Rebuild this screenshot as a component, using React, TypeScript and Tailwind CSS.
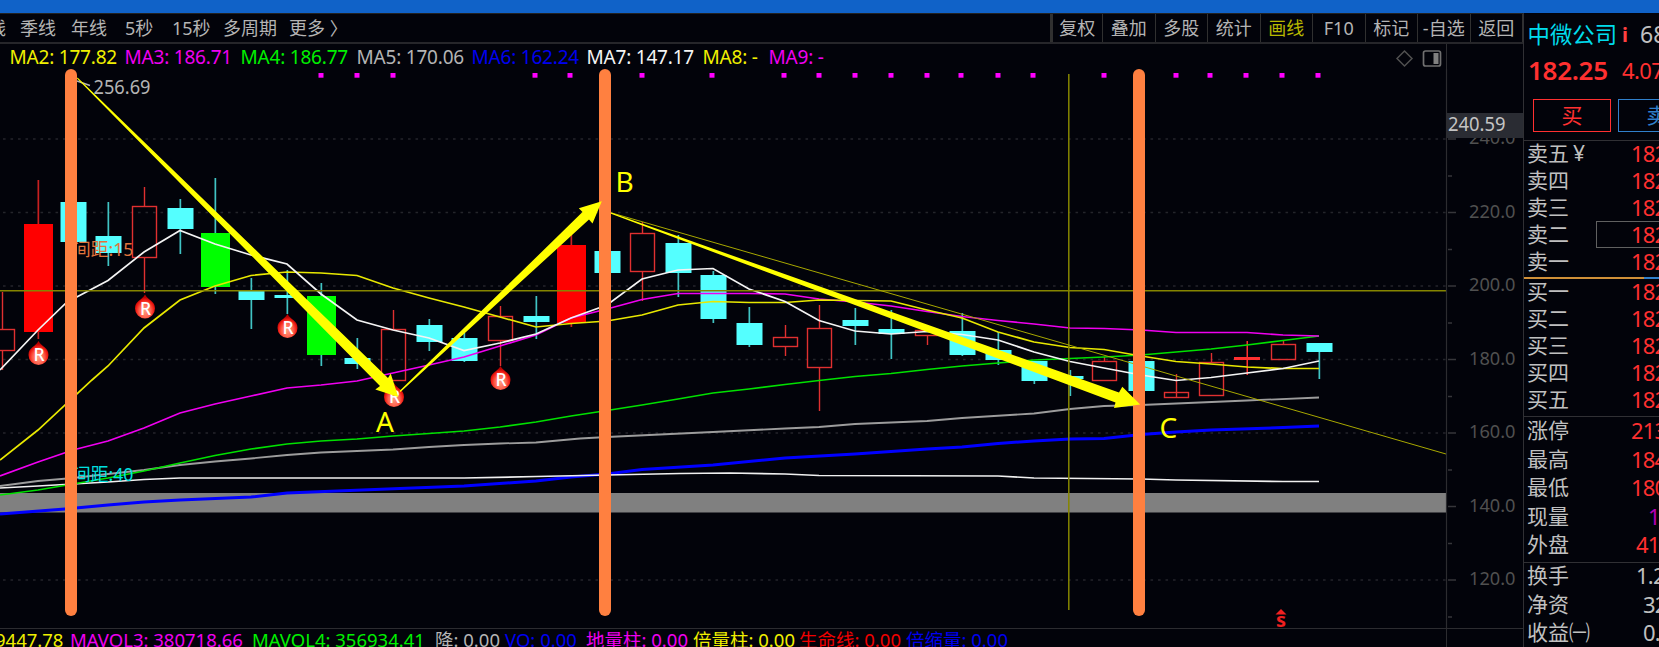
import clsx from 'clsx';

type CandleKind = 'up' | 'down' | 'limitUp' | 'limitDown' | 'flat';

interface Candle {
  x: number;
  kind: CandleKind;
  top: number;
  bottom: number;
  high: number;
  low: number;
}

const c = (x: number, kind: CandleKind, top: number, bottom: number, high: number, low: number): Candle => ({
  x,
  kind,
  top,
  bottom,
  high,
  low,
});

const candles: Candle[] = [
  c(2, 'up', 329, 351, 292, 370),
  c(38, 'limitUp', 224, 332, 180, 339),
  c(73, 'down', 202, 242, 202, 242),
  c(108, 'down', 236, 253, 202, 266),
  c(144, 'up', 206, 258, 187, 293),
  c(180, 'down', 208, 229, 199, 254),
  c(215, 'limitDown', 233, 287, 178, 294),
  c(251, 'down', 291, 300, 278, 329),
  c(287, 'down', 295, 298, 270, 314),
  c(321, 'limitDown', 296, 355, 283, 366),
  c(357, 'down', 358, 364, 338, 369),
  c(393, 'up', 329, 381, 310, 381),
  c(429, 'down', 325, 342, 319, 351),
  c(464, 'down', 338, 361, 333, 362),
  c(500, 'up', 316, 341, 306, 366),
  c(536, 'down', 316, 322, 296, 339),
  c(571, 'limitUp', 245, 323, 235, 327),
  c(607, 'down', 251, 273, 251, 273),
  c(642, 'up', 233, 272, 222, 301),
  c(678, 'down', 243, 273, 235, 297),
  c(713, 'down', 275, 319, 271, 323),
  c(749, 'down', 323, 345, 307, 347),
  c(785, 'up', 337, 347, 325, 356),
  c(819, 'up', 328, 368, 305, 411),
  c(855, 'down', 320, 326, 308, 345),
  c(891, 'down', 329, 334, 310, 359),
  c(927, 'up', 330, 336, 330, 345),
  c(962, 'down', 331, 355, 313, 356),
  c(998, 'down', 350, 360, 332, 365),
  c(1034, 'down', 361, 381, 361, 384),
  c(1070, 'down', 376, 379, 370, 396),
  c(1104, 'up', 361, 381, 357, 381),
  c(1141, 'down', 361, 391, 361, 391),
  c(1176, 'up', 392, 398, 374, 392),
  c(1211, 'up', 362, 396, 353, 396),
  c(1247, 'flat', 357, 360, 341, 375),
  c(1283, 'up', 344, 360, 341, 360),
  c(1319, 'down', 343, 352, 343, 379),
];

const averages = [
  {
    color: '#9c9c9c',
    width: 1.8,
    points:
      '0,486 38,481 73,478 108,474 144,470 180,465 215,461.5 251,458.5 287,455 321,452.5 357,451 393,449.5 429,447 464,445 500,443.5 536,442.5 580,438.5 607,437 713,432 785,428.5 819,427 855,424 927,421 962,418 1034,413.5 1070,409 1104,406 1141,405 1247,400.5 1319,397.5',
  },
  {
    color: '#0000ff',
    width: 3,
    points:
      '0,514 65,509 108,505 144,502 180,500 251,497 287,493 400,488.5 464,486 536,481 571,477 607,474 642,469.5 713,465 785,458 855,454 927,449 962,447 998,443.5 1034,441 1070,439 1104,438.5 1141,434.5 1176,432 1211,430 1283,427.5 1319,426',
  },
  {
    color: '#f0f0f0',
    width: 1.7,
    points:
      '0,488 38,486 73,484 108,482 144,479.5 180,478 464,478 536,476.5 607,475 680,473.5 730,473 785,474 819,475.5 998,476 1034,478 1141,479 1176,480 1283,481.5 1319,481.5',
  },
  {
    color: '#00e000',
    width: 1.7,
    points:
      '0,495 38,490 73,484 108,478 144,471 180,463 215,455.5 251,449 287,444 321,441 357,439 393,436 429,433.5 464,431 500,427 536,422 571,416 607,410.5 642,405 678,399 713,393 749,389 785,384.5 819,380.5 855,376.5 891,373.5 927,369.5 962,366 998,363 1034,360 1070,358.5 1104,357 1141,355 1176,352 1211,349 1247,345 1283,340.5 1319,336',
  },
  {
    color: '#f000f0',
    width: 1.7,
    points:
      '0,476 38,462 73,450 108,441 144,428 180,413 215,404 251,396 287,388 321,385 357,381 393,373 429,365 464,357 500,346 536,335 571,318 607,309 642,299.5 678,293.5 749,293.5 785,294 819,299 855,302 891,306 927,311.5 962,316.5 998,320.5 1034,324 1070,328 1104,328.5 1141,330 1176,332.5 1247,332.5 1283,335 1319,336',
  },
  {
    color: '#e8e800',
    width: 1.7,
    points:
      '0,460 38,430 92,380 108,366 144,328 180,300 215,286 251,275.5 287,272 321,273 357,275.5 393,288 429,298 464,307 500,317 536,327 571,323.5 607,321 642,315 678,305 713,301.5 749,302.5 785,302.5 819,300 891,301 927,310 962,318 998,332 1034,342 1070,347.5 1104,349.5 1141,356 1176,361.5 1211,364 1247,367 1283,368.5 1319,368.5',
  },
  {
    color: '#f4f4f4',
    width: 1.7,
    points:
      '0,370 38,330 65,304 73,299 108,280.5 144,252 180,230.5 215,244 251,255 287,264 321,294 357,320 393,330 429,338 464,350.5 500,343 536,334 571,318 607,305 642,279 678,270 713,268.5 749,289 785,301.5 819,320.5 855,331 891,334 927,331.5 962,334.5 998,340 1034,352 1070,361.5 1104,368 1141,375 1176,380.5 1211,377.5 1247,373 1283,368.5 1319,361',
  },
];

const signalDots = [
  321, 357, 393, 535, 570, 642, 712, 784, 819, 855, 891, 927, 961, 998, 1033, 1104, 1176, 1210, 1246, 1282, 1318,
];

const reminders = [
  [38.5, 355],
  [145, 308.5],
  [287.5, 328],
  [394, 397],
  [500.5, 380],
];

const priceTicks = [
  { label: '240.0', y: 139 },
  { label: '220.0', y: 212.5 },
  { label: '200.0', y: 286 },
  { label: '180.0', y: 359.5 },
  { label: '160.0', y: 433 },
  { label: '140.0', y: 506.5 },
  { label: '120.0', y: 580 },
];

const periods = [
  { label: '季线', width: 'w-[51px]' },
  { label: '年线', width: 'w-[54px]' },
  { label: '5秒', width: 'w-[47px]' },
  { label: '15秒', width: 'w-[51px]' },
  { label: '多周期', width: 'w-[66px]' },
  { label: '更多 〉', width: 'w-[70px]' },
];

const tools = ['复权', '叠加', '多股', '统计', '画线', 'F10', '标记', '-自选', '返回'];

const maLegend = [
  { text: 'MA2: 177.82', style: 'w-[115px] text-[#f0f000]' },
  { text: 'MA3: 186.71', style: 'w-[116px] text-[#f000f0]' },
  { text: 'MA4: 186.77', style: 'w-[116px] text-[#00f000]' },
  { text: 'MA5: 170.06', style: 'w-[115px] text-[#b4b4b4]' },
  { text: 'MA6: 162.24', style: 'w-[115px] text-[#0000f0]' },
  { text: 'MA7: 147.17', style: 'w-[116px] text-[#f4f4f4]' },
  { text: 'MA8: -', style: 'w-[66px] text-[#f0f000]' },
  { text: 'MA9: -', style: 'w-[66px] text-[#f000f0]' },
];

const volLegend = [
  { text: '9447.78', style: 'w-[75px] text-[#f0f000]' },
  { text: 'MAVOL3: 380718.66', style: 'w-[182px] text-[#f000f0]' },
  { text: 'MAVOL4: 356934.41', style: 'w-[183px] text-[#00f000]' },
  { text: '降: 0.00', style: 'w-[70px] text-[#b4b4b4]' },
  { text: 'VO: 0.00', style: 'w-[81px] text-[#0000f0]' },
  { text: '地量柱: 0.00', style: 'w-[107px] text-[#f000f0]' },
  { text: '倍量柱: 0.00', style: 'w-[106px] text-[#f0f000]' },
  { text: '生命线: 0.00', style: 'w-[107px] text-[#f00000]' },
  { text: '倍缩量: 0.00', style: 'w-[107px] text-[#0000f0]' },
];

const asks = ['卖五', '卖四', '卖三', '卖二', '卖一'];
const bids = ['买一', '买二', '买三', '买四', '买五'];

const dayStats = [
  { label: '涨停', value: '213', style: 'pl-[104px] text-[#ff3030]' },
  { label: '最高', value: '184', style: 'pl-[104px] text-[#ff3030]' },
  { label: '最低', value: '180', style: 'pl-[104px] text-[#ff3030]' },
  { label: '现量', value: '1', style: 'pl-[121px] text-[#b400b4]' },
  { label: '外盘', value: '41', style: 'pl-[109px] text-[#ff3030]' },
];

const fundamentals = [
  { label: '换手', value: '1.2', style: 'pl-[109px] text-[#c0c0c0]' },
  { label: '净资', value: '32', style: 'pl-[116px] text-[#c0c0c0]' },
  { label: '收益㈠', value: '0.', style: 'pl-[116px] text-[#c0c0c0]' },
];

function CandleShape({ x, kind, top, bottom, high, low }: Candle) {
  const height = bottom - top;
  if (kind === 'up') {
    return (
      <g fill="none" stroke="#e03030" strokeWidth={1.4}>
        <path d={`M${x + 0.5} ${high}V${top}M${x + 0.5} ${bottom}V${low}`} />
        <rect x={x - 11.5} y={top + 0.5} width={24} height={height - 1} />
      </g>
    );
  }
  if (kind === 'flat') {
    return (
      <g fill="#ff3030">
        <rect x={x - 0.5} y={high} width={1.5} height={low - high} />
        <rect x={x - 13} y={top} width={26} height={height} />
      </g>
    );
  }
  const wide = kind === 'limitUp' || kind === 'limitDown';
  const fill = kind === 'limitUp' ? '#ff0000' : kind === 'limitDown' ? '#00ff00' : '#54ffff';
  return (
    <g>
      <rect x={x - 0.5} y={high} width={1.7} height={low - high} fill={kind === 'limitUp' ? '#c82020' : '#40c4c4'} />
      <rect x={wide ? x - 14 : x - 12.5} y={top} width={wide ? 29 : 26} height={height} fill={fill} />
    </g>
  );
}

function Reminder({ x, y }: { x: number; y: number }) {
  return (
    <g>
      <path
        d={`M${x} ${y - 14}C${x + 3} ${y - 8} ${x + 10} ${y - 8} ${x + 10} ${y}A10 10 0 0 1 ${x - 10} ${y}C${x - 10} ${y - 8} ${x - 3} ${y - 8} ${x} ${y - 14}Z`}
        fill="url(#drop)"
      />
      <text x={x + 0.5} y={y + 6.3} textAnchor="middle" fontSize={17.5} fontWeight={500} fill="#fff">
        R
      </text>
    </g>
  );
}

function PriceChart() {
  return (
    <svg viewBox="0 69 1523 559" width={1523} height={559} className="block shrink-0">
      <defs>
        <radialGradient id="drop" cx="0.5" cy="0.68" r="0.56">
          <stop offset="0" stopColor="#ff9a80" />
          <stop offset="0.5" stopColor="#ff6450" />
          <stop offset="0.8" stopColor="#f01c14" />
          <stop offset="1" stopColor="#b80000" />
        </radialGradient>
      </defs>

      {/* Grid */}
      {priceTicks.map(({ y }) => (
        <line key={y} x1={3} x2={1446} y1={y} y2={y} stroke="#24252b" strokeWidth={1.6} strokeDasharray="2.6 4.9" />
      ))}
      <rect x={0} y={493} width={1446} height={19.5} fill="#808080" />

      {candles.map((candle) => (
        <CandleShape key={candle.x} {...candle} />
      ))}

      {averages.map((line) => (
        <polyline
          key={line.color}
          points={line.points}
          fill="none"
          stroke={line.color}
          strokeWidth={line.width}
        />
      ))}

      {signalDots.map((x) => (
        <rect key={x} x={x - 2.5} y={73} width={5} height={4.7} fill="#ff00ff" />
      ))}

      {reminders.map(([x, y]) => (
        <Reminder key={x} x={x} y={y} />
      ))}

      {/* Spacing labels */}
      <text x={73} y={256} fontSize={18.5} fill="#e0743c" textLength={60.5} lengthAdjust="spacingAndGlyphs">
        间距:15
      </text>
      <text x={73} y={480.5} fontSize={18.5} fill="#00e0e0" textLength={60.5} lengthAdjust="spacingAndGlyphs">
        间距:40
      </text>
      <path d="M77 81L90 85.5" stroke="#b4b4b4" strokeWidth={1.4} />
      <text x={93.5} y={93.5} fontSize={19} fill="#b4b4b4" textLength={57} lengthAdjust="spacingAndGlyphs">
        256.69
      </text>

      {/* Crosshair */}
      <path d="M0 290.8H1446M1068.8 74V610" stroke="#858500" strokeWidth={1.5} fill="none" />

      {/* Trend line */}
      <path d="M605 211L1446 454" stroke="#a8a800" strokeWidth={1} />

      {/* Cycle bars */}
      {[65, 599, 1133].map((x) => (
        <rect key={x} x={x} y={69} width={12} height={547} rx={6} fill="#ff8040" />
      ))}

      {/* Wave arrows */}
      <g fill="#ffff00">
        <path d="M77.5 77.5L388 378L390.7 373.5L398.3 397L375.3 389.5L380 386L77 78.5Z" />
        <path d="M399.5 391L582.5 212L578.8 208.2L601.8 201.3L592.5 223.5L589 219.5L400.5 392Z" />
        <path d="M611 212.6L1119 392.5L1122.3 386.7L1140.2 404.6L1114 408L1115.5 402.5L611 213.8Z" />
      </g>
      <g fill="#ffff00" fontSize={28}>
        <text x={376} y={432}>A</text>
        <text x={615.5} y={192}>B</text>
        <text x={1159.5} y={438}>C</text>
      </g>

      {/* Price axis */}
      <path d="M1446.5 69V628" stroke="#2c2c30" strokeWidth={1.2} />
      {priceTicks.map(({ label, y }) => (
        <g key={label}>
          <path d={`M1448 ${y}H1456M1448 ${y + 37}H1452`} stroke="#36363a" strokeWidth={1.5} />
          <text x={1469} y={y + 5.3} fontSize={18.5} fill="#505050" textLength={46.5} lengthAdjust="spacingAndGlyphs">
            {label}
          </text>
        </g>
      ))}
      <rect x={1447} y={113} width={76} height={25} fill="#2a2c33" />
      <text x={1448} y={131} fontSize={19} fill="#c4c4c4" textLength={57.5} lengthAdjust="spacingAndGlyphs">
        240.59
      </text>

      {/* Sell marker */}
      <path d="M1281 609L1286.5 614.5H1275.5Z" fill="#f02020" />
      <text x={1281} y={627} textAnchor="middle" fontSize={20} fontWeight={700} fill="#f02020">
        s
      </text>
    </svg>
  );
}

function Toolbar() {
  return (
    <div className="flex h-[31px] shrink-0 items-stretch border-t border-b-2 border-t-[#222] border-b-[#26262a] text-[18px] leading-[29px] text-[#b4b4b4]">
      <div className="flex flex-1 overflow-hidden whitespace-nowrap">
        <span className="-ml-[12px] w-[32px] shrink-0">线</span>
        {periods.map((period) => (
          <span key={period.label} className={clsx('shrink-0', period.width)}>
            {period.label}
          </span>
        ))}
      </div>
      <div className="flex border-l-3 border-[#303030]">
        {tools.map((tool) => (
          <button
            key={tool}
            className={clsx(
              'border-r border-[#303030] text-center leading-[29px] whitespace-nowrap',
              tool === '复权' ? 'w-[50.5px]' : 'w-[52.5px]',
              tool === '画线' && 'text-[#b8b800]',
            )}
          >
            {tool}
          </button>
        ))}
      </div>
    </div>
  );
}

function IndicatorBar() {
  return (
    <div className="flex h-[25px] shrink-0">
      <div className="flex w-[1447px] border-r border-[#2c2c30] pl-[9.5px] text-[19px] leading-[26px] tracking-[-0.2px] whitespace-nowrap">
        {maLegend.map((item) => (
          <span key={item.text} className={clsx('shrink-0', item.style)}>
            {item.text}
          </span>
        ))}
        <svg width={50} height={20} viewBox="0 0 50 20" className="mt-[5px] mr-px ml-auto" fill="none">
          <path d="M9.5 2L17 9.5L9.5 17L2 9.5Z" stroke="#505050" strokeWidth={1.5} />
          <rect x={28.5} y={2} width={17} height={15} rx={2} stroke="#707070" strokeWidth={1.7} />
          <rect x={38.5} y={4} width={5} height={11} fill="#808080" />
        </svg>
      </div>
    </div>
  );
}

function QuoteRow({ label, value, style }: { label: string; value: string; style: string }) {
  return (
    <div className="flex h-[28.5px] items-center">
      <span className="w-0 whitespace-nowrap text-[#c0c0c0]">{label}</span>
      <span className={clsx('shrink-0 text-[22px] tracking-[-0.8px]', style)}>{value}</span>
    </div>
  );
}

function DepthRow({ label }: { label: string }) {
  return (
    <div className="flex h-[27px] items-center">
      <span className="w-[69px] shrink-0 whitespace-nowrap text-[#c0c0c0]">
        {label}
        {label === '卖五' && <span className="ml-[4px]">¥</span>}
      </span>
      <span
        className={clsx(
          'flex h-[27px] w-[90px] shrink-0 items-center border pl-[34px] text-[22px] tracking-[-0.8px] text-[#ff3030]',
          label === '卖二' ? 'border-[#606060]' : 'border-transparent',
        )}
      >
        182
      </span>
    </div>
  );
}

function QuotePanel() {
  return (
    <aside className="w-[136px] shrink-0 overflow-hidden border-l border-[#303034] text-[21px] leading-[25px]">
      <div className="flex h-[42px] items-center pl-[3.5px] whitespace-nowrap">
        <span className="text-[22.4px] text-[#00dcec]">中微公司</span>
        <span className="ml-[5px] text-[20px] font-bold text-[#ff4040]">i</span>
        <span className="ml-[12px] text-[23px] text-[#c0c0c0]">68</span>
      </div>
      <div className="flex h-[30px] items-center pl-[4px] whitespace-nowrap text-[#ff3030]">
        <span className="w-[94px] shrink-0 text-[26px] font-semibold tracking-[-0.3px]">182.25</span>
        <span className="text-[22px] tracking-[-0.6px]">4.07</span>
      </div>
      <div className="mt-[14px] flex gap-[7px] pl-[9px]">
        <button className="h-[33px] w-[78px] shrink-0 border border-[#ff3030] leading-[31px] text-[#ff3030]">买</button>
        <button className="h-[33px] w-[78px] shrink-0 border border-[#3080cc] leading-[31px] text-[#3080cc]">卖</button>
      </div>
      <div className="mt-[8px] border-t border-[#303034] pl-[3px]">
        <div className="-mt-[1px]">
          {asks.map((label) => (
            <DepthRow key={label} label={label} />
          ))}
        </div>
      </div>
      <div className="mt-[2px] flex h-[1.5px]">
        <div className="w-[120px] bg-[#d09038]" />
        <div className="flex-1 bg-[#3080cc]" />
      </div>
      <div className="-mt-[1px] pl-[3px]">
        {bids.map((label) => (
          <DepthRow key={label} label={label} />
        ))}
      </div>
      <div className="mt-[3px] h-[146px] border-t border-[#303034] pl-[3px]">
        {dayStats.map((row) => (
          <QuoteRow key={row.label} {...row} />
        ))}
      </div>
      <div className="border-t border-[#303034] pl-[3px]">
        <div className="-mt-[1px]">
          {fundamentals.map((row) => (
            <QuoteRow key={row.label} {...row} />
          ))}
        </div>
      </div>
    </aside>
  );
}

export default function App() {
  return (
    <div className="flex h-[647px] w-[1659px] flex-col overflow-hidden bg-[#02030a] font-['Noto_Sans','Noto_Sans_CJK_SC',sans-serif]">
      <div className="h-[13px] shrink-0 bg-[#1062c8]" />
      <div className="flex min-h-0 flex-1">
        <main className="flex w-[1523px] shrink-0 flex-col">
          <Toolbar />
          <IndicatorBar />
          <PriceChart />
          <div className="flex h-[19px] shrink-0 border-t border-[#2c2c30]">
            <div className="flex w-[1447px] overflow-hidden border-r border-[#2c2c30] text-[18.5px] leading-[22px] whitespace-nowrap">
              {volLegend.map((item, i) => (
                <span key={item.text} className={clsx('shrink-0', i === 0 && '-ml-[5px]', item.style)}>
                  {item.text}
                </span>
              ))}
            </div>
          </div>
        </main>
        <QuotePanel />
      </div>
    </div>
  );
}
